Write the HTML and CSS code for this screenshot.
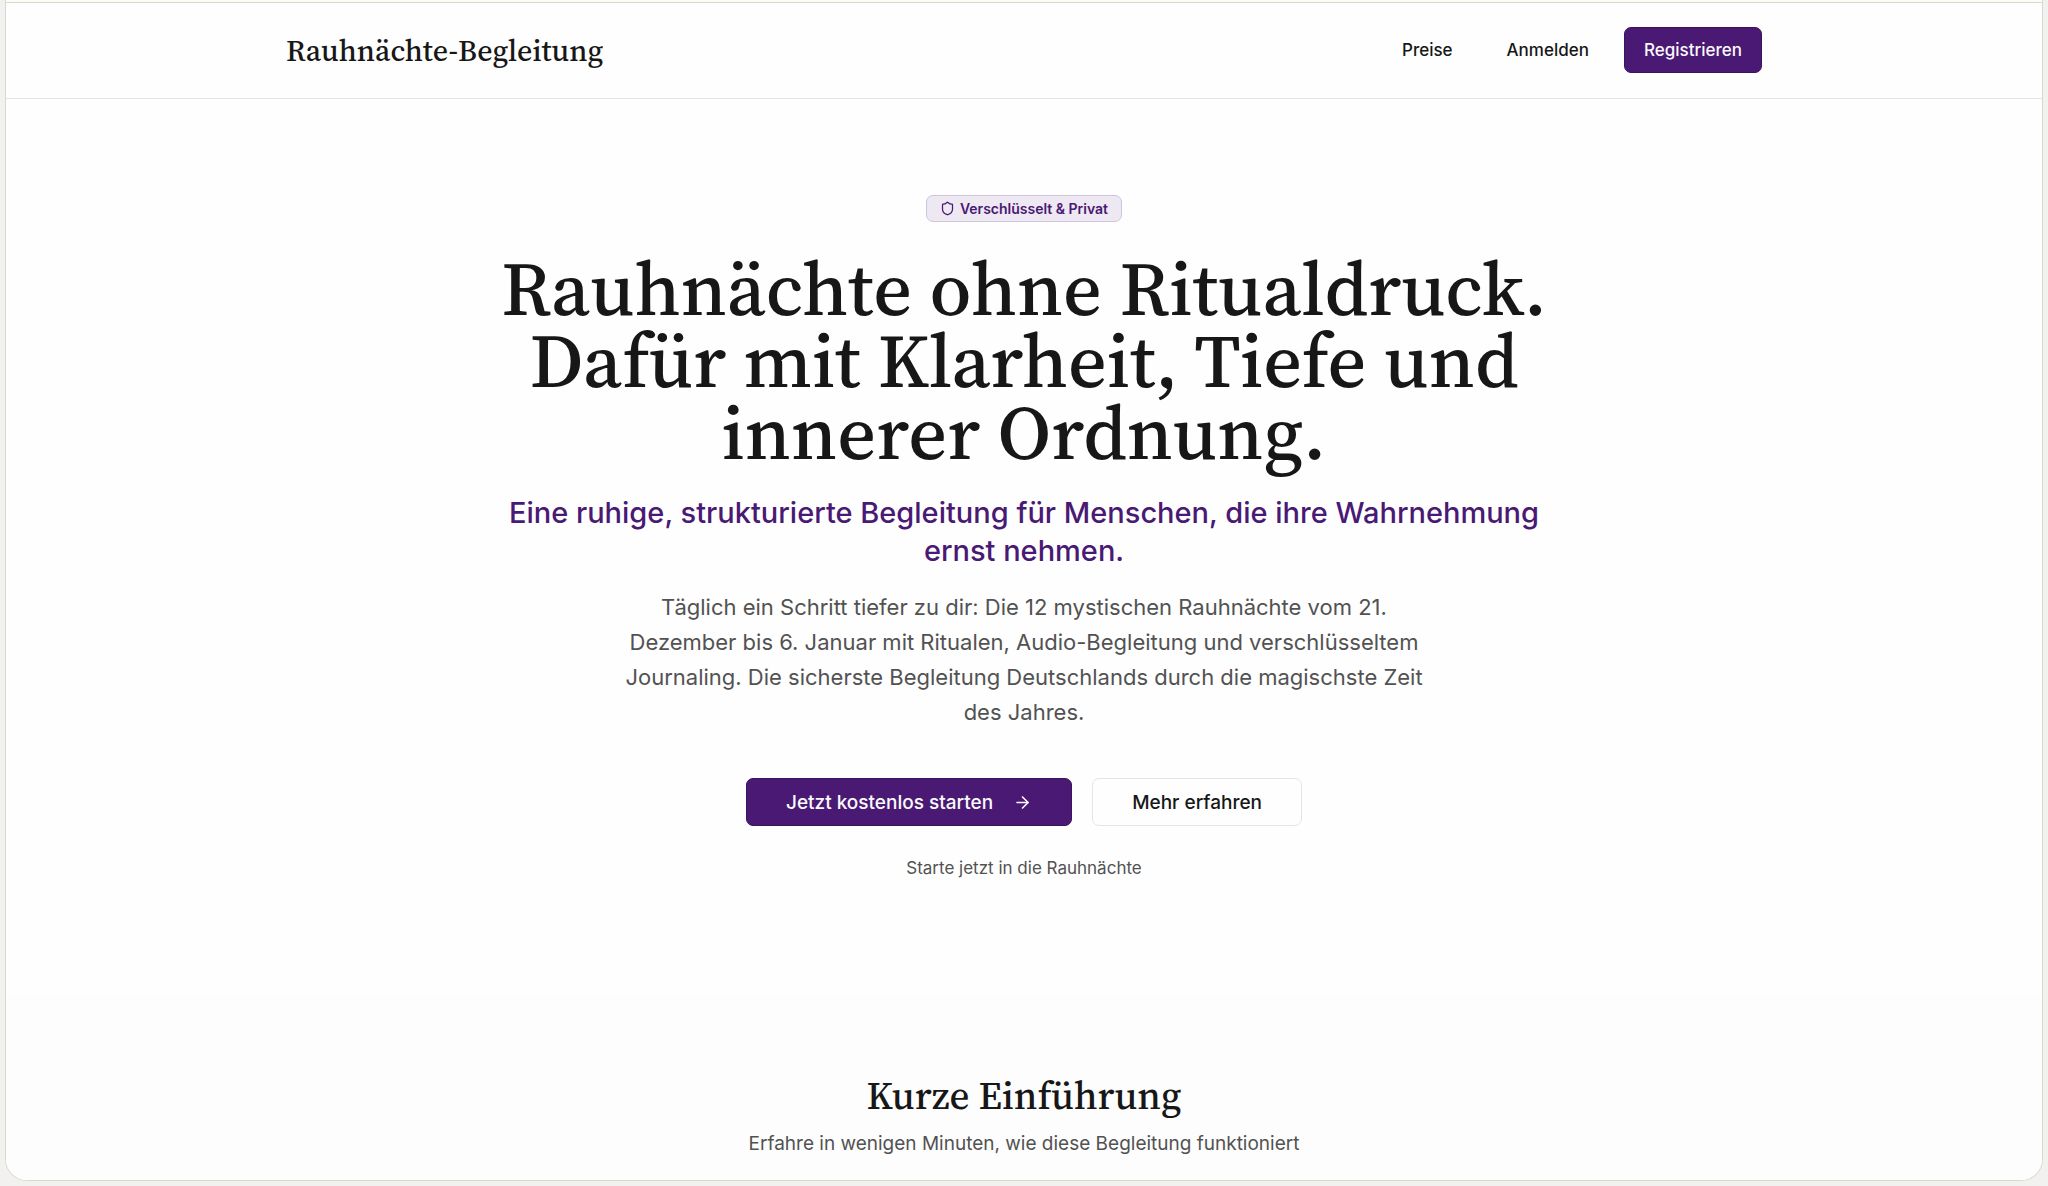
FILE: index.html
```
<!DOCTYPE html>
<html lang="de">
<head>
    <meta charset="UTF-8">
    <meta name="viewport" content="width=device-width, initial-scale=1.0">
    <title>Rauhnächte-Begleitung</title>
    <link rel="stylesheet" href="styles.css">
</head>
<body>

<div class="page">
    <div class="topline"></div>
    <header class="header">
        <div class="header-inner">
            <a href="#" class="logo">Rauhnächte-Begleitung</a>
            <nav class="nav">
                <a href="#preise" class="nav-link">Preise</a>
                <a href="#anmelden" class="nav-link">Anmelden</a>
                <a href="#registrieren" class="btn btn-primary btn-small">Registrieren</a>
            </nav>
        </div>
    </header>

    <main class="main">
        <section class="hero">
            <div class="badge">
                <svg class="badge-icon" viewBox="0 0 24 24" fill="none" stroke="currentColor" stroke-width="2" stroke-linecap="round" stroke-linejoin="round" aria-hidden="true">
                    <path d="M20 13c0 5-3.5 7.5-7.66 8.95a1 1 0 0 1-.67-.01C7.5 20.5 4 18 4 13V6a1 1 0 0 1 1-1c2 0 4.5-1.2 6.24-2.72a1.17 1.17 0 0 1 1.52 0C14.51 3.81 17 5 19 5a1 1 0 0 1 1 1z"/>
                </svg>
                <span>Verschlüsselt &amp; Privat</span>
            </div>
            <h1 class="hero-title">Rauhnächte ohne Ritualdruck. Dafür mit Klarheit, Tiefe und innerer Ordnung.</h1>
            <p class="hero-subtitle">Eine ruhige, strukturierte Begleitung für Menschen, die ihre Wahrnehmung ernst nehmen.</p>
            <p class="hero-text">Täglich ein Schritt tiefer zu dir: Die 12 mystischen Rauhnächte vom 21. Dezember bis 6. Januar mit Ritualen, Audio-Begleitung und verschlüsseltem Journaling. Die sicherste Begleitung Deutschlands durch die magischste Zeit des Jahres.</p>
            <div class="hero-actions">
                <button type="button" class="btn btn-primary btn-large">
                    Jetzt kostenlos starten
                    <svg class="btn-icon" viewBox="0 0 24 24" fill="none" stroke="currentColor" stroke-width="2" stroke-linecap="round" stroke-linejoin="round" aria-hidden="true">
                        <path d="M5 12h14"/>
                        <path d="m12 5 7 7-7 7"/>
                    </svg>
                </button>
                <button type="button" class="btn btn-outline btn-large">Mehr erfahren</button>
            </div>
            <p class="hero-note">Starte jetzt in die Rauhnächte</p>
        </section>

        <section class="intro">
            <h2 class="intro-title">Kurze Einführung</h2>
            <p class="intro-text">Erfahre in wenigen Minuten, wie diese Begleitung funktioniert</p>
        </section>
    </main>
</div>

</body>
</html>
```
FILE: styles.css
```
* {
    box-sizing: border-box;
}
body {
    margin: 0;
    padding: 0 5px 5px;
    min-height: 100vh;
    display: flex;
    background-color: #f2f1ef;
    color: #171717;
    font-family: Inter, sans-serif;
}
.page {
    flex: 1;
    display: flex;
    flex-direction: column;
    background-color: #fefefe;
    border: 1px solid #d9d8cc;
    border-top: none;
    border-radius: 0 0 22px 22px;
    overflow: hidden;
}
.topline {
    height: 3px;
    background-color: #fcfcf7;
    border-bottom: 1px solid #d9d8cc;
}
.header {
    border-bottom: 1px solid #e5e5e5;
}
.header-inner {
    max-width: 1476px;
    margin: 0 auto;
    padding: 24px 0;
    display: flex;
    align-items: flex-start;
    justify-content: space-between;
}
.logo {
    color: #171717;
    font-family: "Source Serif 4", "Liberation Serif", serif;
    font-size: 30px;
    line-height: 47px;
    font-weight: 500;
    text-decoration: none;
}
.nav {
    display: flex;
    align-items: center;
    gap: 16px;
}
.nav-link {
    padding: 12px 19px;
    color: #171717;
    font-size: 17px;
    line-height: 22px;
    font-weight: 500;
    text-decoration: none;
}
.btn {
    display: inline-flex;
    align-items: center;
    justify-content: center;
    border: 1px solid transparent;
    border-radius: 7px;
    font-family: inherit;
    font-weight: 500;
    text-decoration: none;
    cursor: pointer;
}
.btn-primary {
    background-color: #491974;
    border-color: #3b145e;
    color: #fafafa;
}
.btn-outline {
    background-color: #fefefe;
    border-color: #e5e5e5;
    color: #171717;
}
.btn-small {
    padding: 11px 19px;
    font-size: 17px;
    line-height: 22px;
}
.btn-large {
    height: 48px;
    padding: 0 39px;
    gap: 20px;
    font-size: 19px;
}
.btn-icon {
    width: 19px;
    height: 19px;
}
.main {
    flex: 1;
    display: flex;
    flex-direction: column;
}
.hero {
    display: flex;
    flex-direction: column;
    align-items: center;
    padding: 96px 24px 116px;
    text-align: center;
}
.badge {
    display: flex;
    align-items: center;
    gap: 5px;
    padding: 3px 13px;
    border: 1px solid #cfc4dc;
    border-radius: 7px;
    background-color: #ede8f1;
    color: #491974;
    font-size: 14px;
    line-height: 19px;
    font-weight: 600;
}
.badge-icon {
    width: 15px;
    height: 15px;
}
.hero-title {
    max-width: 1080px;
    margin: 30px 0 0;
    font-family: "Source Serif 4", "Liberation Serif", serif;
    font-size: 76px;
    line-height: 72px;
    font-weight: 500;
}
.hero-subtitle {
    max-width: 1080px;
    margin: 26px 0 0;
    color: #491974;
    font-size: 29px;
    line-height: 38px;
    font-weight: 500;
}
.hero-text {
    max-width: 806px;
    margin: 20px 0 0;
    color: #525252;
    font-size: 22px;
    line-height: 35px;
}
.hero-actions {
    display: flex;
    gap: 20px;
    margin-top: 48px;
}
.hero-note {
    margin: 30px 0 0;
    color: #525252;
    font-size: 17px;
    line-height: 24px;
}
.intro {
    flex: 1;
    padding: 78px 24px 20px;
    background-color: #fdfdfd;
    text-align: center;
}
.intro-title {
    margin: 0;
    font-family: "Source Serif 4", "Liberation Serif", serif;
    font-size: 39px;
    line-height: 44px;
    font-weight: 500;
}
.intro-text {
    margin: 12px 0 0;
    color: #525252;
    font-size: 19px;
    line-height: 28px;
}
```
